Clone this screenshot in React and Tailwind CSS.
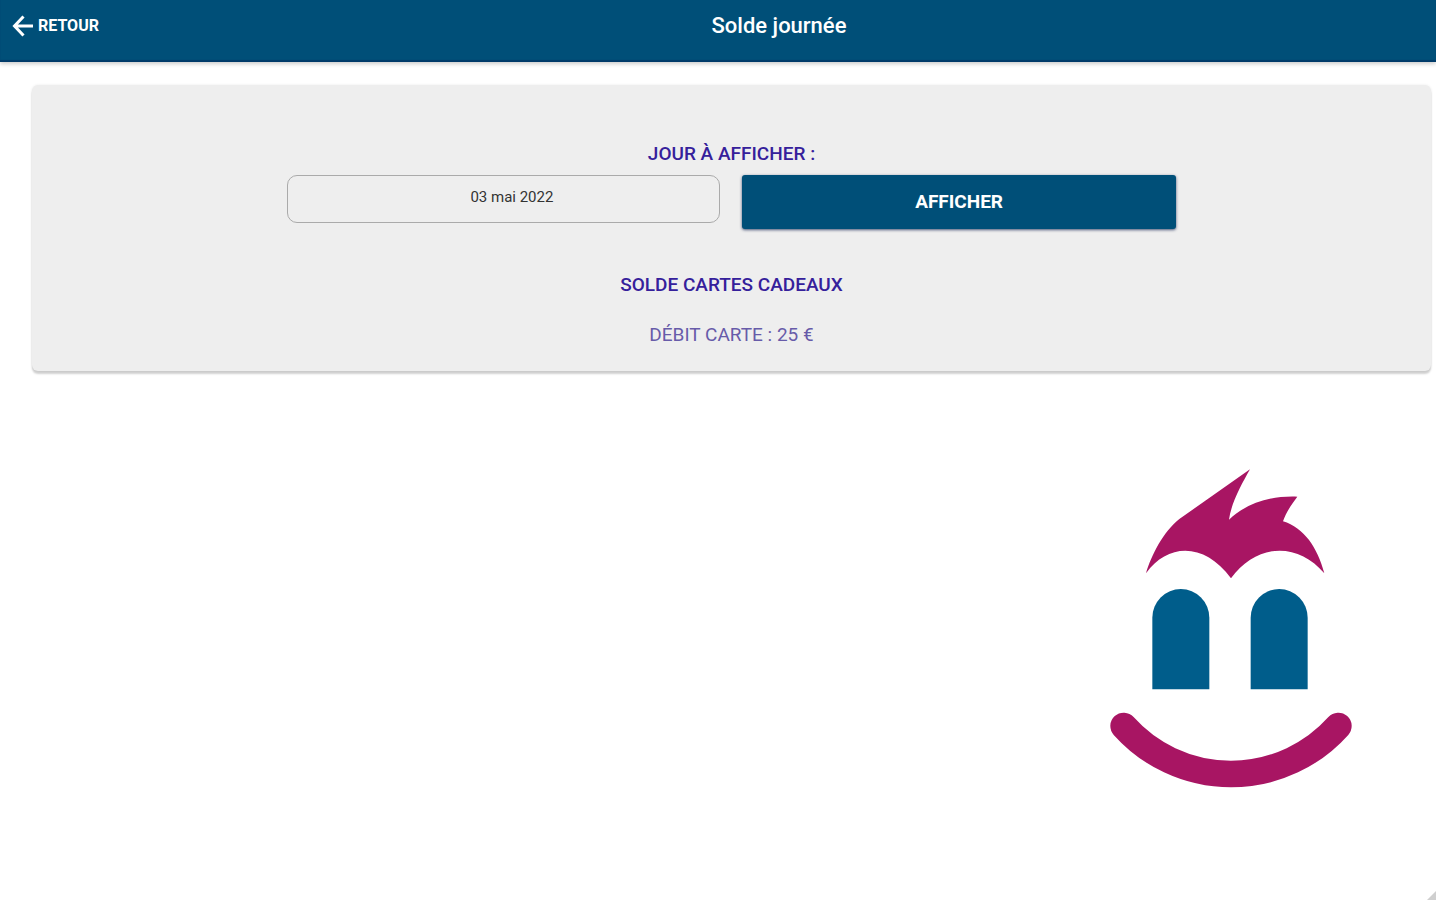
function BackArrow() {
  return (
    <svg viewBox="0 0 22 22" className="h-[22px] w-[22px]" fill="none" stroke="currentColor" strokeWidth="3" aria-hidden="true">
      <path d="M21 11H3M11.500 1.500L2.500 11L11.500 20.500" />
    </svg>
  );
}

function Mascot() {
  return (
    <svg viewBox="0 0 810 1020" className="h-[340px] w-[270px]" aria-hidden="true">
      <path
        fill="#a81563"
        d="M450 28C425 72 394 128 387 179C440 130 505 107 592 110C575 132 558 158 549 184C612 203 652 262 673 340C595 246 470 248 393 355C315 248 205 247 138 340C154 285 190 215 238 177Z"
      />
      <path fill="#005d8b" d="M157 688V473A85.500 86 0 0 1 328 473V688Z" />
      <path fill="#005d8b" d="M452 688V473A85.500 86 0 0 1 623 473V688Z" />
      <path fill="none" stroke="#a81563" strokeWidth="80" strokeLinecap="round" d="M71 798A432 432 0 0 0 715 798" />
    </svg>
  );
}

export default function App() {
  return (
    <div className="flex min-h-screen flex-col bg-white font-['Roboto',sans-serif]">
      <header className="flex h-[62px] items-start bg-[#004f78] pt-2 text-white shadow-[inset_0_-2px_1px_#003a69,0_2px_4px_rgba(0,0,0,0.2)]">
        <button type="button" className="flex h-9 w-[122px] items-center gap-1 pl-3 text-base font-bold">
          <BackArrow />
          RETOUR
        </button>
        <h1 className="flex-1 text-center text-[22px] leading-9 font-medium">Solde journée</h1>
      </header>

      <main className="flex flex-1 flex-col pt-[23px] pr-[5px] pl-8">
        <section className="flex flex-col items-center rounded-md bg-[#eeeeee] pt-[55px] pb-[22px] text-[19px] text-[#35209b] shadow-[0_3px_2px_rgba(0,0,0,0.18),0_0_3px_rgba(0,0,0,0.08)]">
          <label htmlFor="day" className="leading-7 font-medium">
            JOUR À AFFICHER :
          </label>
          <form className="mt-[7px] grid w-[63.5%] grid-cols-2 items-start gap-[22px]" onSubmit={(e) => e.preventDefault()}>
            <input
              id="day"
              type="text"
              defaultValue="03 mai 2022"
              className="h-12 w-full rounded-[10px] border border-[#aaaaaa] pb-1 pl-4 text-center text-[15px] text-[#333333]"
            />
            <button type="submit" className="h-[54px] rounded-[3px] bg-[#004f78] font-bold text-white shadow-[0_1px_3px_rgba(0,20,70,0.7)]">
              AFFICHER
            </button>
          </form>
          <h2 className="mt-[42px] leading-7 font-medium">SOLDE CARTES CADEAUX</h2>
          <p className="mt-[22px] leading-7 text-[#675ba9]">DÉBIT CARTE : 25 €</p>
        </section>

        <div className="mt-auto flex justify-end pr-[61px] pb-[100px]">
          <Mascot />
        </div>
      </main>

      <svg viewBox="0 0 9 9" className="fixed right-0 bottom-0 h-[9px] w-[9px]" aria-hidden="true">
        <path d="M9 0V9H0Z" fill="#cfcfcf" />
      </svg>
    </div>
  );
}
